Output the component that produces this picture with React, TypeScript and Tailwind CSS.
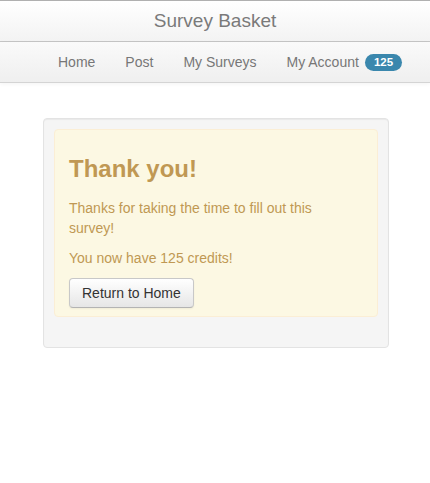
import React from "react";

const navLinks = ["Home", "Post", "My Surveys"];

export default function App() {
  return (
    <div className="min-h-[483px] bg-white font-['Liberation_Sans',Arial,sans-serif] text-[14px] leading-5 text-[#333]">
      {/* brand bar */}
      <div className="border-t border-[#b0b0b0] border-b border-b-[#c6c6c6] bg-gradient-to-b from-white to-[#f3f3f3]">
        <div className="flex h-10 items-center justify-center text-[19px] leading-10 text-[#7a7a7a]">
          Survey Basket
        </div>
      </div>

      {/* nav bar */}
      <div className="border-b border-[#d4d4d4] bg-gradient-to-b from-[#fafafa] to-[#efefef] shadow-[0_1px_4px_rgba(0,0,0,0.05)]">
        <ul className="flex h-10 items-center pl-[43px]">
          {navLinks.map((link) => (
            <li key={link}>
              <a className="block px-[15px] leading-10 text-[#777]">{link}</a>
            </li>
          ))}
          <li>
            <a className="flex items-center px-[15px] leading-10 text-[#777]">
              My Account
              <span className="ml-[6px] rounded-full bg-[#3a87ad] px-[9px] text-[11.5px] font-bold leading-[17px] text-white">
                125
              </span>
            </a>
          </li>
        </ul>
      </div>

      <div className="pl-[43px] pt-[35px]">
        <div className="w-[346px] rounded border border-[#e3e3e3] bg-[#f5f5f5] p-[10px] shadow-[inset_0_1px_1px_rgba(0,0,0,0.05)]">
          <div className="mb-5 rounded border border-[#fbeed5] bg-[#fcf8e3] pb-2 pl-[14px] pr-[35px] pt-2 text-[#c09853]">
            <h1 className="mb-[9px] mt-[11px] text-[24px] font-bold leading-10">Thank you!</h1>
            <p className="mb-[10px]">Thanks for taking the time to fill out this survey!</p>
            <p className="mb-[10px]">You now have 125 credits!</p>
            <button className="rounded border border-[#c8c8c8] border-b-[#b3b3b3] bg-gradient-to-b from-white to-[#e6e6e6] px-3 py-1 text-[14px] leading-5 text-[#333] shadow-[inset_0_1px_0_rgba(255,255,255,0.2),0_1px_2px_rgba(0,0,0,0.05)]">
              Return to Home
            </button>
          </div>
        </div>
      </div>
    </div>
  );
}
